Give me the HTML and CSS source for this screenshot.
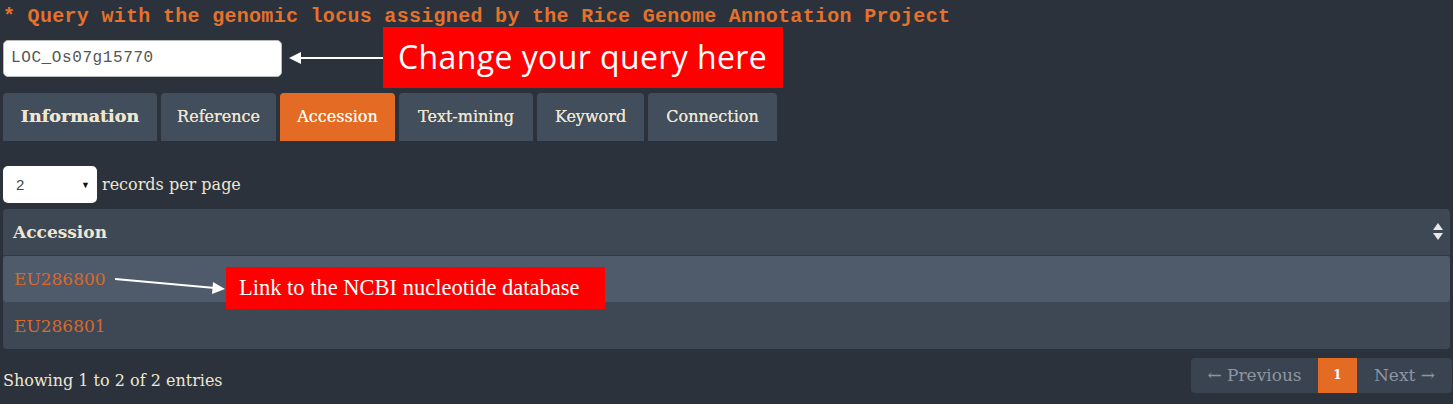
FILE: index.html
```html
<!DOCTYPE html>
<html>
<head>
<meta charset="utf-8">
<link rel="stylesheet" href="styles.css">
</head>
<body>
<div class="page">
  <div class="title">* Query with the genomic locus assigned by the Rice Genome Annotation Project</div>
  <div class="query-row">
    <div class="query-input">LOC_Os07g15770</div>
    <svg class="arrow-left" width="101" height="14" viewBox="0 0 101 14">
      <line x1="8" y1="7" x2="101" y2="7" stroke="#fff" stroke-width="2"/>
      <polygon points="0,7 12,1 12,13" fill="#fff"/>
    </svg>
    <div class="callout-big">Change your query here</div>
  </div>
  <div class="tabs">
    <div class="tab tab-bold">Information</div>
    <div class="tab">Reference</div>
    <div class="tab active">Accession</div>
    <div class="tab">Text-mining</div>
    <div class="tab">Keyword</div>
    <div class="tab">Connection</div>
  </div>
  <div class="length-row">
    <div class="select"><span>2</span><span class="caret">▼</span></div>
    <span class="length-label">records per page</span>
  </div>
  <div class="table">
    <div class="thead">
      <span>Accession</span>
      <svg class="sort" width="10" height="20" viewBox="0 0 10 20">
        <polygon points="5,1 10,8 0,8" fill="#e8e8e8"/>
        <polygon points="0,11 10,11 5,18" fill="#e8e8e8"/>
      </svg>
    </div>
    <div class="row hover">
      <a class="acc">EU286800</a>
      <svg class="arrow-diag" width="111" height="20" viewBox="0 0 111 20">
        <line x1="0" y1="2" x2="100" y2="11" stroke="#fff" stroke-width="2"/>
        <polygon points="110,12 98,5 97,17" fill="#fff"/>
      </svg>
      <div class="callout-small">Link to the NCBI nucleotide database</div>
    </div>
    <div class="row">
      <a class="acc">EU286801</a>
    </div>
  </div>
  <div class="footer">
    <div class="info">Showing 1 to 2 of 2 entries</div>
    <div class="pager">
      <span class="pg">← Previous</span>
      <span class="pg cur">1</span>
      <span class="pg">Next →</span>
    </div>
  </div>
</div>
</body>
</html>
```

FILE: styles.css
```css
html, body {
  margin: 0;
  padding: 0;
  background: #2b323c;
}
.page {
  width: 1453px;
  height: 404px;
  padding: 0 3px;
  box-sizing: border-box;
  font-family: "DejaVu Serif", Georgia, serif;
  color: #efe6cf;
  overflow: hidden;
}
.title {
  font-family: "Liberation Mono", "DejaVu Sans Mono", monospace;
  font-weight: bold;
  font-size: 20px;
  letter-spacing: 0.3px;
  color: #e5712a;
  height: 27px;
  line-height: 34px;
  white-space: nowrap;
}
.query-row {
  display: flex;
  align-items: center;
  height: 61px;
}
.query-input {
  width: 279px;
  height: 37px;
  box-sizing: border-box;
  background: #fff;
  border: 1px solid #bbb;
  border-radius: 5px;
  font-family: "Liberation Mono", monospace;
  font-size: 16px;
  letter-spacing: 0.6px;
  color: #555;
  line-height: 35px;
  padding-left: 7px;
  margin-top: 1px;
}
.arrow-left {
  margin-left: 7px;
}
.callout-big {
  background: #ff0000;
  color: #fff;
  width: 400px;
  height: 61px;
  box-sizing: border-box;
  font-family: "Open Sans", sans-serif;
  font-size: 32px;
  letter-spacing: 0.4px;
  line-height: 60px;
  padding-left: 15px;
  margin-left: -7px;
  position: relative;
  z-index: 1;
  white-space: nowrap;
}
.tabs {
  display: flex;
  gap: 4px;
  margin-top: 5px;
  height: 48px;
}
.tab {
  background: #434e5c;
  border-radius: 4px 4px 0 0;
  height: 48px;
  line-height: 47px;
  font-size: 16px;
  color: #efe6cf;
  box-sizing: border-box;
  text-align: center;
  white-space: nowrap;
  text-shadow: 0 0 0.4px #efe6cf;
}
.tab:nth-child(1) { width: 154px; }
.tab:nth-child(2) { width: 115px; }
.tab:nth-child(3) { width: 115px; }
.tab:nth-child(4) { width: 134px; }
.tab:nth-child(5) { width: 107px; }
.tab:nth-child(6) { width: 129px; }
.tab-bold { font-weight: bold; font-size: 17.5px; }
.tab.active {
  background: #e46b24;
  color: #fff;
}
.length-row {
  display: flex;
  align-items: center;
  margin-top: 25px;
  height: 37px;
}
.select {
  width: 94px;
  height: 37px;
  box-sizing: border-box;
  background: #fff;
  border-radius: 5px;
  display: flex;
  align-items: center;
  justify-content: space-between;
  padding: 0 7px 0 13px;
  font-family: "Liberation Sans", sans-serif;
  font-size: 15px;
  color: #444;
}
.caret {
  font-size: 9px;
  color: #111;
}
.length-label {
  margin-left: 5px;
  font-size: 16px;
}
.table {
  margin-top: 6px;
  border-radius: 4px;
  background: #3e4855;
  overflow: hidden;
}
.thead {
  height: 46px;
  display: flex;
  align-items: center;
  justify-content: space-between;
  padding: 0 7px 0 10px;
  font-weight: bold;
  font-size: 17px;
  border-bottom: 1px solid #323a45;
}
.row {
  height: 46px;
  display: flex;
  align-items: center;
  padding-left: 11px;
  font-size: 17px;
}
.row.hover {
  background: #4f5b6b;
  border-radius: 4px;
  margin: 0 0 1px;
}
.acc {
  color: #d9692a;
  width: 101px;
}
.arrow-diag {
  margin-top: 16px;
}
.callout-small {
  background: #ff0000;
  color: #fff;
  font-family: "Liberation Serif", serif;
  font-size: 22.5px;
  width: 379px;
  height: 42px;
  line-height: 42px;
  box-sizing: border-box;
  padding-left: 13px;
  margin-top: 18px;
  position: relative;
  z-index: 1;
  white-space: nowrap;
}
.footer {
  display: flex;
  justify-content: space-between;
  align-items: center;
  margin-top: 9px;
  height: 35px;
}
.info {
  font-size: 16px;
  margin-top: 10px;
}
.pager {
  display: flex;
  background: #3a4350;
  border-radius: 4px;
  height: 35px;
  overflow: hidden;
  margin-right: -2px;
}
.pg {
  line-height: 35px;
  color: #8d96a2;
  font-size: 17px;
  box-sizing: border-box;
  text-align: center;
  white-space: nowrap;
}
.pg:first-child { width: 127px; }
.pg:last-child { width: 95px; }
.pg.cur {
  background: #e46b24;
  color: #fff;
  font-weight: bold;
  font-size: 12px;
  width: 39px;
}
```
